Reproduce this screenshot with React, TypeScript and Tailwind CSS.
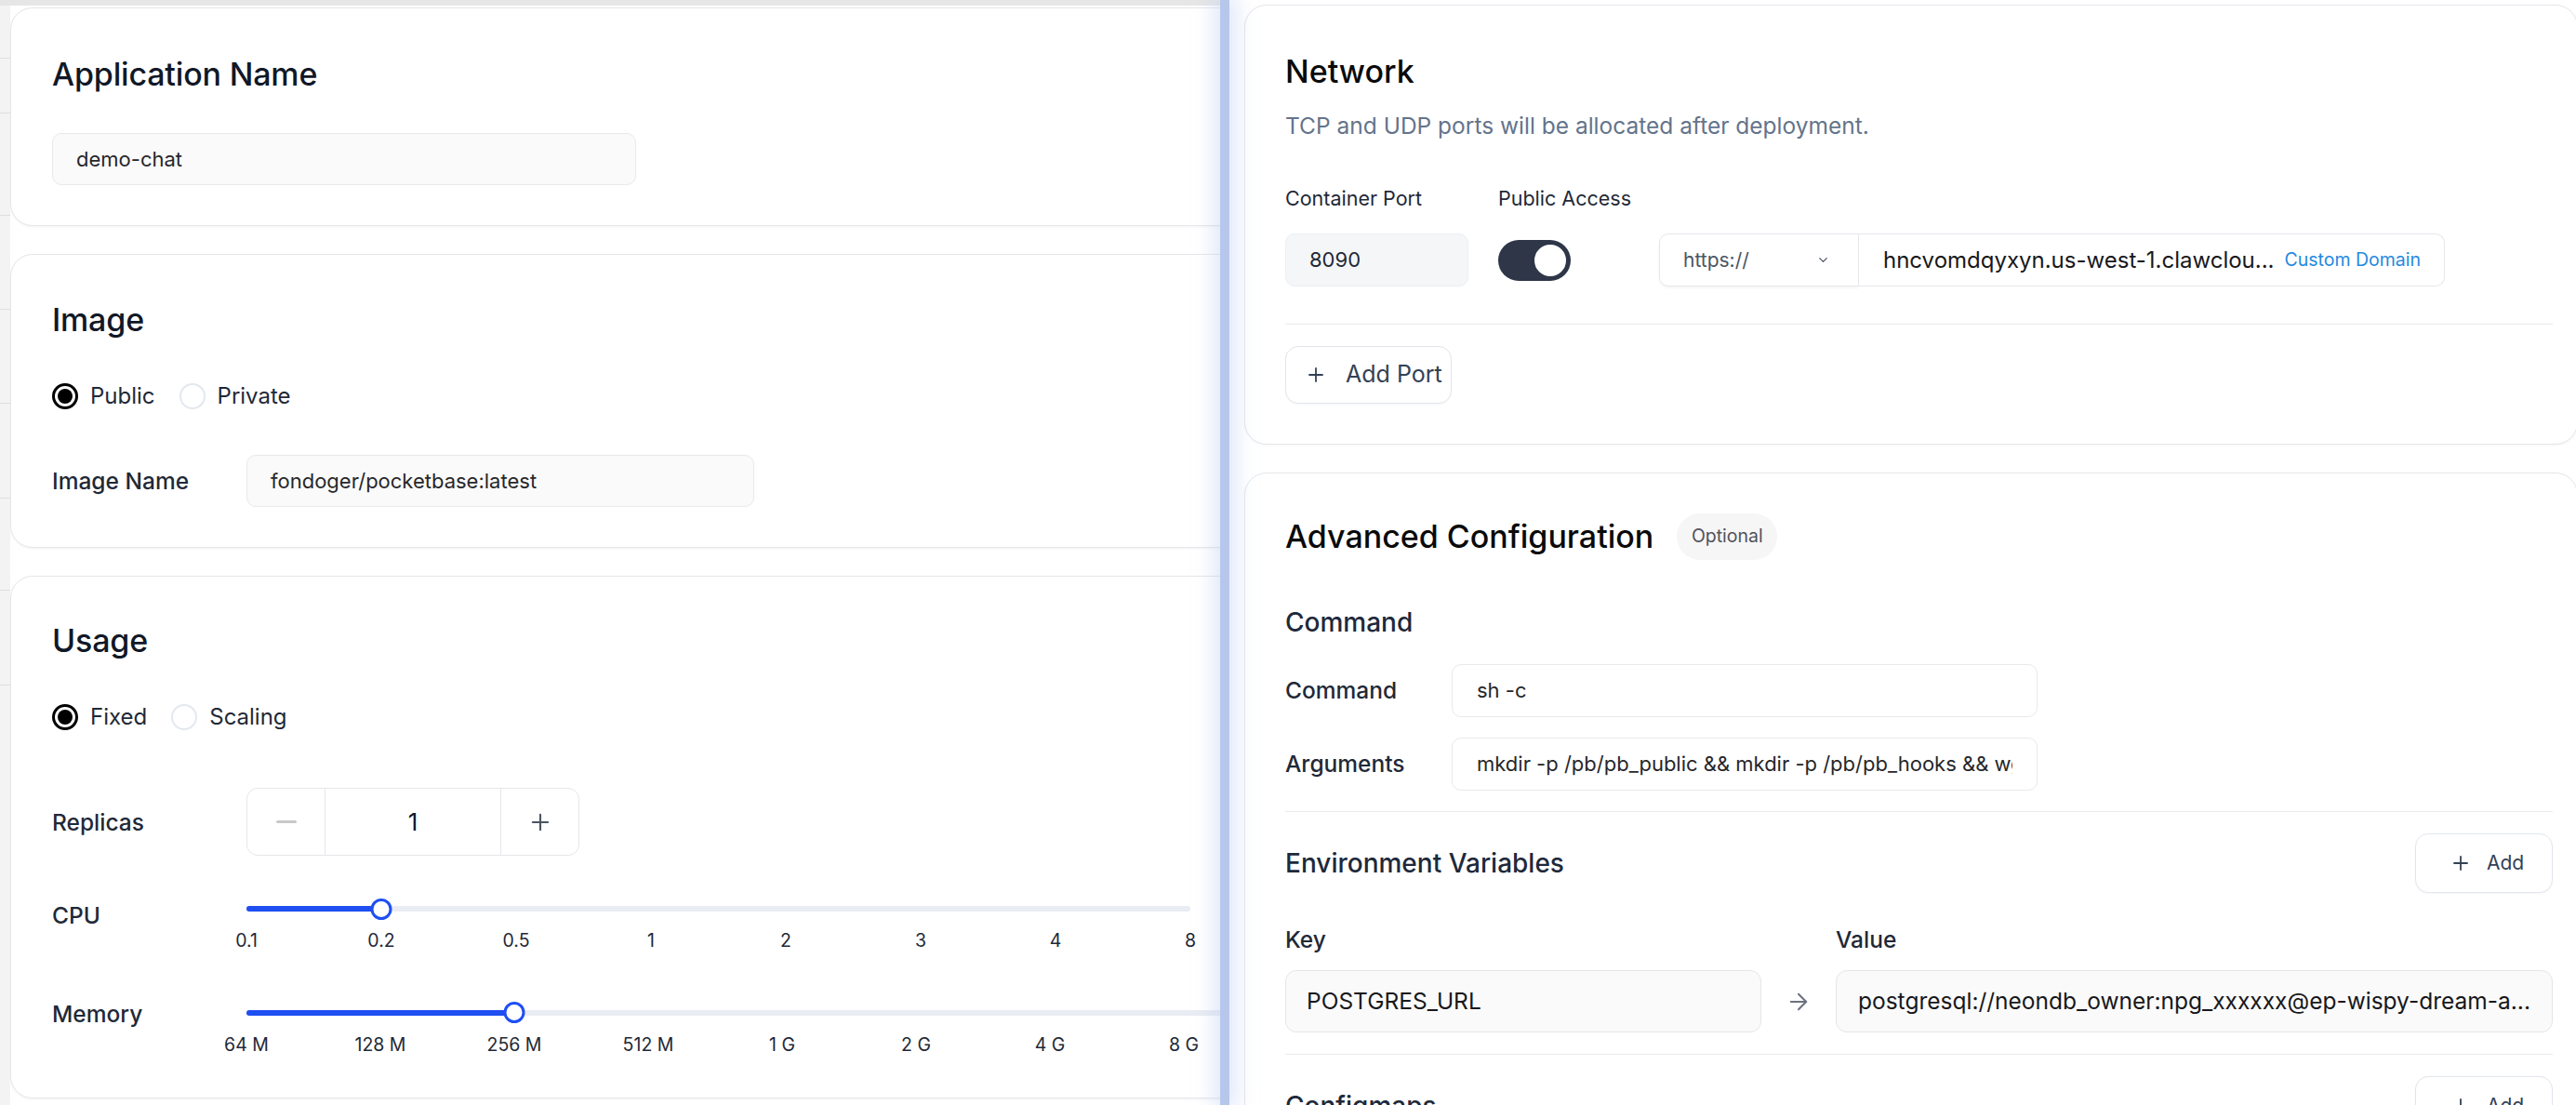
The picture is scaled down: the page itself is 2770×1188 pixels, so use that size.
import { ArrowRight, ChevronDown, Plus } from 'lucide-react';

const cpuMarks = ['0.1', '0.2', '0.5', '1', '2', '3', '4', '8'];
// the last stop sits behind the divider, so its label is left empty
const memoryMarks = ['64 M', '128 M', '256 M', '512 M', '1 G', '2 G', '4 G', '8 G', ''];

function Radio({ label, checked }: { label: string; checked?: boolean }) {
  return (
    <div className="flex items-center gap-[13px]">
      {checked ? (
        <span className="flex h-[28px] w-[28px] items-center justify-center rounded-full border-[3px] border-black bg-white">
          <span className="h-[16px] w-[16px] rounded-full bg-black" />
        </span>
      ) : (
        <span className="h-[28px] w-[28px] rounded-full border-2 border-[#e3e8ef] bg-white" />
      )}
      <span className="text-[24px] leading-[28px] text-[#1f2937]">{label}</span>
    </div>
  );
}

function Slider({ marks, value, width, className }: { marks: string[]; value: number; width: number; className: string }) {
  const pos = (value / (marks.length - 1)) * width;
  return (
    <div className={className}>
      <div className="relative h-[23px]">
        <div className="absolute inset-x-0 top-[8.5px] h-[6px] rounded-full bg-[#e9ecf2]" />
        <div className="absolute left-0 top-[8.5px] h-[6px] rounded-full bg-[#1f4ff2]" style={{ width: pos }} />
        <div
          className="absolute top-0 h-[23px] w-[23px] -translate-x-1/2 rounded-full border-[3px] border-[#1f4ff2] bg-white"
          style={{ left: pos }}
        />
      </div>
      <div className="-mx-[32px] mt-[10.5px] flex justify-between">
        {marks.map((m, i) => (
          <span key={i} className="h-[24px] w-[64px] text-center text-[19.5px] leading-[24px] text-[#1f2937]">
            {m}
          </span>
        ))}
      </div>
    </div>
  );
}

function Field({ children, className }: { children: React.ReactNode; className: string }) {
  return (
    <div className={`flex items-center overflow-hidden rounded-[10px] border border-[#e7e9ec] ${className}`}>
      {children}
    </div>
  );
}

function LeftColumn() {
  const card = 'w-[1440px] shrink-0 rounded-[24px] border border-[#e4e6ea] bg-white pl-[44px] shadow-[0_1px_3px_rgba(0,0,0,0.05)]';
  const title = 'text-[34px] font-medium leading-[40px] tracking-[-0.005em] text-[#111827]';
  const label = 'w-[209px] shrink-0 text-[24.5px] font-medium leading-[30px] text-[#1f2937]';

  return (
    <div className="flex w-[1312px] shrink-0 flex-col">
      <div className="h-[6px] w-full bg-[#e6e6e6]" />
      <div className="flex flex-1">
        {/* backdrop peeking out on the left */}
        <div className="flex w-[11px] shrink-0 flex-col bg-[#f3f3f4]">
          <div className="h-[57px] border-b border-[#dedede]" />
          <div className="h-[59px] border-b border-[#dedede]" />
          <div className="h-[110px] border-b border-[#dedede]" />
          <div className="h-[101px] border-b border-[#dedede]" />
          <div className="h-[101px] border-b border-[#dedede]" />
          <div className="h-[102px] border-b border-[#dedede]" />
          <div className="h-[99px] border-b border-[#dedede]" />
          <div className="h-[102px] border-b border-[#dedede]" />
        </div>

        <div className="flex w-[1301px] flex-col gap-[30px] overflow-hidden pt-[2px]">
          {/* Application Name */}
          <section className={`${card} pb-[43px] pt-[51px]`}>
            <h2 className={title}>Application Name</h2>
            <Field className="mt-[43px] h-[56px] w-[628px] bg-[#fafafa] px-[25px]">
              <span className="text-[22px] text-[#27272a]">demo-chat</span>
            </Field>
          </section>

          {/* Image */}
          <section className={`${card} pb-[43px] pt-[50px]`}>
            <h2 className={title}>Image</h2>
            <div className="mt-[48px] flex items-center gap-[26px]">
              <Radio label="Public" checked />
              <Radio label="Private" />
            </div>
            <div className="mt-[49px] flex items-center">
              <span className={label}>Image Name</span>
              <Field className="h-[56px] w-[546px] bg-[#fafafa] px-[25px]">
                <span className="text-[22px] text-[#27272a]">fondoger/pocketbase:latest</span>
              </Field>
            </div>
          </section>

          {/* Usage */}
          <section className={`${card} pb-[45px] pt-[49px]`}>
            <h2 className={title}>Usage</h2>
            <div className="mt-[48px] flex items-center gap-[26px]">
              <Radio label="Fixed" checked />
              <Radio label="Scaling" />
            </div>

            <div className="mt-[62px] flex items-center">
              <span className={label}>Replicas</span>
              <div className="flex h-[73px] overflow-hidden rounded-[12px] border border-[#e5e7eb]">
                <button className="flex w-[84px] items-center justify-center border-r border-[#e5e7eb]">
                  <span className="h-[3px] w-[22px] rounded-full bg-[#c9c9c9]" />
                </button>
                <div className="flex w-[188px] items-center justify-center text-[26px] text-[#111827]">1</div>
                <button className="flex w-[84px] items-center justify-center border-l border-[#e5e7eb] text-[#4b5563]">
                  <Plus size={28} strokeWidth={1.8} />
                </button>
              </div>
            </div>

            <div className="mt-[45.5px] flex items-start">
              <span className={`${label} mt-[3px]`}>CPU</span>
              <Slider marks={cpuMarks} value={1} width={1015} className="w-[1015px]" />
            </div>

            <div className="mt-[54px] flex items-start">
              <span className={`${label} -mt-[2px]`}>Memory</span>
              <Slider marks={memoryMarks} value={2} width={1152} className="w-[1152px]" />
            </div>
          </section>
        </div>
      </div>
    </div>
  );
}

function RightColumn() {
  const card = 'rounded-[24px] border border-[#e4e6ea] bg-white pl-[43px] pr-[26px] shadow-[0_1px_3px_rgba(0,0,0,0.04)]';
  const heading = 'text-[28px] font-medium leading-[34px] text-[#1e293b]';
  const label = 'text-[24.5px] font-medium leading-[30px] text-[#1f2937]';

  return (
    <div className="flex flex-1 flex-col gap-[30px] pl-[16px] pr-[1px] pt-[5px]">
      {/* Network */}
      <section className={`${card} pb-[43px] pt-[51px]`}>
        <h2 className="text-[34px] font-medium leading-[40px] text-[#0a0a0a]">Network</h2>
        <p className="mt-[23px] text-[24.5px] leading-[30px] text-[#64748b]">
          TCP and UDP ports will be allocated after deployment.
        </p>

        <div className="mt-[50px] grid grid-cols-[197px_141px_auto] gap-x-[32px] gap-y-[25px]">
          <span className="whitespace-nowrap text-[21.5px] leading-[26px] text-[#1f2937]">Container Port</span>
          <span className="whitespace-nowrap text-[21.5px] leading-[26px] text-[#1f2937]">Public Access</span>
          <span />

          <div className="flex h-[57px] items-center rounded-[10px] border border-[#eceef1] bg-[#f5f6f8] px-[25px] text-[22px] text-[#1f2937]">
            8090
          </div>
          <div className="flex items-center">
            <div className="flex h-[44px] w-[78px] items-center justify-end rounded-full bg-[#2e3648] p-[2px]">
              <span className="h-[40px] w-[40px] rounded-full border-[3px] border-[#2e3648] bg-white" />
            </div>
          </div>
          <div className="flex h-[57px]">
            <div className="flex w-[215px] items-center justify-between rounded-l-[10px] border border-[#e5e7eb] bg-white pl-[25px] pr-[30px] shadow-[0_2px_3px_rgba(0,0,0,0.04)]">
              <span className="text-[21px] text-[#4b5563]">https://</span>
              <ChevronDown size={15} strokeWidth={2} className="text-[#4b5563]" />
            </div>
            <div className="flex w-[630px] items-center gap-[2px] rounded-r-[10px] border border-l-0 border-[#e5e7eb] bg-white pl-[26px] pr-[25px]">
              <span className="min-w-0 flex-1 truncate text-[24px] text-[#18181b]">hncvomdqyxyn.us-west-1.clawclou...</span>
              <span className="shrink-0 text-[19.5px] text-[#1f8ae0]">Custom Domain</span>
            </div>
          </div>
        </div>

        <div className="mt-[39.5px] h-px bg-[#e8eaed]" />

        <button className="mt-[23px] flex h-[62px] w-[179px] items-center gap-[20px] rounded-[14px] border border-[#e2e6ec] bg-white pl-[20px] shadow-[0_1px_2px_rgba(0,0,0,0.04)]">
          <Plus size={24} strokeWidth={1.8} className="text-[#334155]" />
          <span className="text-[25px] text-[#334155]">Add Port</span>
        </button>
      </section>

      {/* Advanced Configuration */}
      <section className={`${card} flex-1 pt-[43px]`}>
        <div className="flex h-[50px] items-center gap-[25px]">
          <h2 className="text-[34px] font-medium leading-[40px] text-[#0a0a0a]">Advanced Configuration</h2>
          <span className="flex h-[50px] w-[108px] items-center justify-center rounded-full bg-[#f6f6f6] text-[19.5px] text-[#52525b]">
            Optional
          </span>
        </div>

        <h3 className={`${heading} mt-[50px]`}>Command</h3>
        <div className="mt-[28px] flex items-center">
          <span className={`${label} w-[179px] shrink-0`}>Command</span>
          <Field className="h-[57px] w-[630px] bg-white px-[26px]">
            <span className="text-[22px] text-[#27272a]">sh -c</span>
          </Field>
        </div>
        <div className="mt-[22px] flex items-center">
          <span className={`${label} w-[179px] shrink-0`}>Arguments</span>
          <Field className="h-[57px] w-[630px] bg-white px-[26px]">
            <span className="block overflow-hidden whitespace-nowrap text-[22px] text-[#27272a]">
              mkdir -p /pb/pb_public &amp;&amp; mkdir -p /pb/pb_hooks &amp;&amp; wget -O /pb/pb_hooks/main.pb.js
            </span>
          </Field>
        </div>

        <div className="mt-[22px] h-px bg-[#e8eaed]" />

        <div className="mt-[23px] flex items-center justify-between">
          <h3 className={heading}>Environment Variables</h3>
          <button className="flex h-[64px] w-[148px] items-center gap-[16px] rounded-[14px] border border-[#e2e6ec] bg-white pl-[36px] shadow-[0_1px_2px_rgba(0,0,0,0.04)]">
            <Plus size={24} strokeWidth={1.8} className="text-[#334155]" />
            <span className="text-[21px] text-[#334155]">Add</span>
          </button>
        </div>

        <div className="mt-[35.5px] flex">
          <span className={`${label} w-[592px] shrink-0`}>Key</span>
          <span className={label}>Value</span>
        </div>
        <div className="mt-[18px] flex h-[67px] items-center">
          <div className="flex h-full w-[512px] shrink-0 items-center rounded-[12px] border border-[#e6e6e6] bg-[#fafafa] px-[22px]">
            <span className="text-[24.5px] text-[#18181b]">POSTGRES_URL</span>
          </div>
          <div className="flex w-[80px] shrink-0 justify-center text-[#6b7280]">
            <ArrowRight size={28} strokeWidth={1.8} />
          </div>
          <div className="flex h-full min-w-0 flex-1 items-center rounded-[12px] border border-[#e6e6e6] bg-[#fafafa] px-[23px]">
            <span className="truncate text-[24.5px] text-[#18181b]">
              postgresql://neondb_owner:npg_xxxxxx@ep-wispy-dream-a...
            </span>
          </div>
        </div>

        <div className="mt-[22.5px] h-px bg-[#e8eaed]" />

        <div className="mt-[23px] flex items-center justify-between">
          <h3 className={heading}>Configmaps</h3>
          <button className="flex h-[64px] w-[148px] items-center gap-[16px] rounded-[14px] border border-[#e2e6ec] bg-white pl-[36px] shadow-[0_1px_2px_rgba(0,0,0,0.04)]">
            <Plus size={24} strokeWidth={1.8} className="text-[#334155]" />
            <span className="text-[21px] text-[#334155]">Add</span>
          </button>
        </div>
      </section>
    </div>
  );
}

export default function App() {
  return (
    <div className="flex h-[1188px] w-[2770px] overflow-hidden bg-white font-['Inter','Noto_Sans',sans-serif] antialiased">
      <LeftColumn />
      <div className="relative z-10 w-[10px] shrink-0 bg-[#b7c7ec] shadow-[0_0_22px_6px_rgba(190,206,242,0.55)]" />
      <RightColumn />
    </div>
  );
}
